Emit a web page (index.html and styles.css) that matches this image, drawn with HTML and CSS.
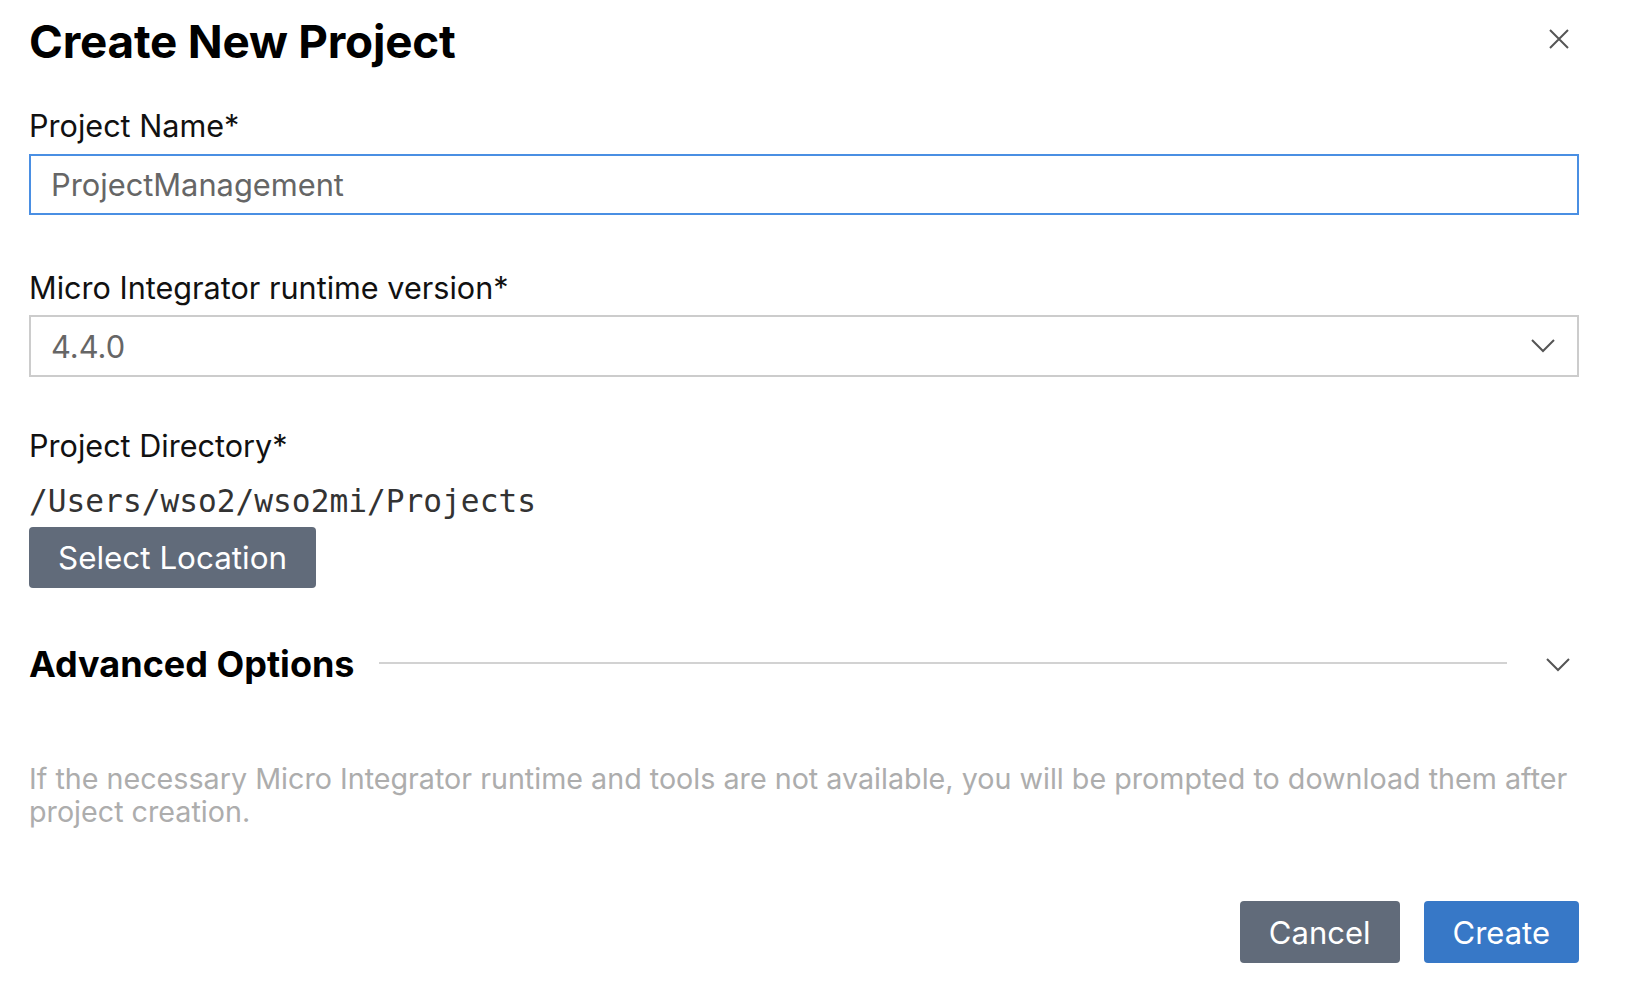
FILE: index.html
```html
<!DOCTYPE html>
<html lang="en">
<head>
<meta charset="utf-8">
<title>Create New Project</title>
<link rel="stylesheet" href="styles.css">
</head>
<body>
<div class="dialog">
  <div class="header">
    <h1 class="title">Create New Project</h1>
    <button class="close" aria-label="Close">
      <svg width="20" height="20" viewBox="0 0 20 20"><path d="M1 1 L19 19 M19 1 L1 19" stroke="#555" stroke-width="2" fill="none"/></svg>
    </button>
  </div>

  <label class="label label-first">Project Name*</label>
  <input class="text-input" type="text" value="ProjectManagement">

  <label class="label label-second">Micro Integrator runtime version*</label>
  <div class="select">
    <span class="select-value">4.4.0</span>
    <svg class="chev" width="24" height="14" viewBox="0 0 24 14"><path d="M1 1 L12 12 L23 1" stroke="#555" stroke-width="2" fill="none"/></svg>
  </div>

  <label class="label label-third">Project Directory*</label>
  <div class="path">/Users/wso2/wso2mi/Projects</div>
  <button class="btn btn-secondary btn-location">Select Location</button>

  <div class="advanced">
    <h2 class="adv-title">Advanced Options</h2>
    <div class="adv-line"></div>
    <svg class="adv-chev" width="24" height="14" viewBox="0 0 24 14"><path d="M1 1 L12 12 L23 1" stroke="#555" stroke-width="2" fill="none"/></svg>
  </div>

  <p class="help">If the necessary Micro Integrator runtime and tools are not available, you will be prompted to download them after project creation.</p>

  <div class="actions">
    <button class="btn btn-secondary btn-cancel">Cancel</button>
    <button class="btn btn-primary">Create</button>
  </div>
</div>
</body>
</html>
```

FILE: styles.css
```css
html, body {
  margin: 0;
  padding: 0;
  background: #ffffff;
}

body {
  font-family: Inter, "Noto Sans", "Liberation Sans", sans-serif;
  color: #111111;
}

.dialog {
  display: flex;
  flex-direction: column;
  align-items: flex-start;
  padding: 15px 57px 0 29px;
}

.header {
  display: flex;
  align-items: center;
  justify-content: space-between;
  width: 100%;
}

.title {
  margin: 0;
  font-size: 45.8px;
  line-height: 54px;
  font-weight: 700;
  color: #000000;
  letter-spacing: -0.2px;
}

.close {
  border: 0;
  background: transparent;
  padding: 0;
  margin: 0 10px 6px 0;
  width: 20px;
  height: 20px;
  display: flex;
}

.label {
  display: block;
  font-size: 30.6px;
  line-height: 36px;
  color: #111111;
}

.label-first { margin-top: 39px; }
.label-second { margin-top: 55px; }
.label-third { margin-top: 51px; }

.text-input {
  box-sizing: border-box;
  margin-top: 10px;
  width: 100%;
  height: 61px;
  border: 2px solid #4a8fe3;
  border-radius: 0;
  padding: 0 20px;
  font-family: inherit;
  font-size: 30.8px;
  color: #666666;
  outline: none;
  background: #ffffff;
}

.select {
  box-sizing: border-box;
  margin-top: 9px;
  width: 100%;
  height: 62px;
  border: 2px solid #cccccc;
  display: flex;
  align-items: center;
  justify-content: space-between;
  padding: 0 22px 0 20px;
}

.select-value {
  font-size: 30.8px;
  color: #666666;
}

.path {
  margin-top: 19px;
  font-family: "DejaVu Sans Mono", "Liberation Mono", monospace;
  font-size: 31.2px;
  line-height: 36px;
  color: #333333;
}

.btn {
  border: 0;
  border-radius: 4px;
  font-family: inherit;
  font-size: 31px;
  color: #ffffff;
  height: 62px;
  padding: 0 29px;
  cursor: pointer;
}

.btn-secondary { background: #616b7a; }
.btn-primary { background: #3778c7; }

.btn-location {
  margin-top: 8px;
  height: 61px;
  font-size: 31.4px;
  padding: 0 29px 0 29px;
}

.advanced {
  margin-top: 56px;
  width: 100%;
  display: flex;
  align-items: center;
}

.adv-title {
  margin: 0;
  font-size: 36px;
  line-height: 41px;
  font-weight: 700;
  color: #000000;
}

.adv-line {
  flex: 1;
  height: 2px;
  background: #d2d2d2;
  margin: 0 39px 0 24px;
  position: relative;
  top: -2px;
}

.adv-chev {
  margin-right: 9px;
}

.help {
  margin: 77px 0 0 0;
  font-size: 28.7px;
  line-height: 33px;
  color: #adadad;
}

.actions {
  margin-top: 73px;
  width: 100%;
  display: flex;
  justify-content: flex-end;
  gap: 24px;
}
```
